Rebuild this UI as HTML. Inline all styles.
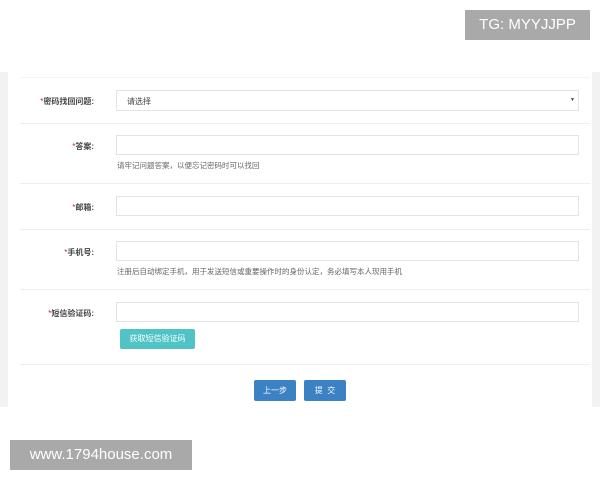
<!DOCTYPE html>
<html><head><meta charset="utf-8"><style>
body{margin:0;width:600px;height:480px;background:#fff;position:relative;overflow:hidden;font-family:"Liberation Sans","Noto Sans CJK SC",sans-serif}
.g{position:absolute;background:#f2f2f2}
.badge{position:absolute;background:#a9a9a9;color:#fff;font-size:15px;line-height:30px;text-align:center}
.lab{position:absolute;right:506px;font-size:8px;color:#444;font-weight:bold;white-space:nowrap}
.lab b{color:#a33;font-weight:normal}
.in{position:absolute;left:116px;width:463px;height:20px;border:1px solid #e3e3e3;background:#fff;box-sizing:border-box}
.hint{position:absolute;left:117px;font-size:7.5px;color:#666}
.sep{position:absolute;left:20px;width:570px;height:1px;background:#eee}
.btn{position:absolute;color:#fff;font-size:8px;text-align:center;border-radius:2px}
</style></head><body>
<div class="g" style="left:0;top:72px;width:8px;height:335px"></div>
<div class="g" style="left:592px;top:72px;width:8px;height:335px"></div>
<div class="badge" style="left:465px;top:10px;width:125px;height:30px">TG: MYYJJPP</div>
<div class="badge" style="left:10px;top:440px;width:182px;height:30px">www.1794house.com</div>
<div class="sep" style="top:77px;background:#f3f3f3"></div>
<div class="lab" style="top:96px"><b>*</b>密码找回问题:</div>
<div class="in" style="top:90px;height:21px;font-size:8px;color:#444;padding:5px 10px">请选择<span style="position:absolute;right:3px;top:6px;font-size:5px">▼</span></div>
<div class="sep" style="top:123px"></div>
<div class="lab" style="top:141px"><b>*</b>答案:</div>
<div class="in" style="top:135px"></div>
<div class="hint" style="top:160px">请牢记问题答案，以便忘记密码时可以找回</div>
<div class="sep" style="top:183px"></div>
<div class="lab" style="top:202px"><b>*</b>邮箱:</div>
<div class="in" style="top:196px"></div>
<div class="sep" style="top:229px"></div>
<div class="lab" style="top:247px"><b>*</b>手机号:</div>
<div class="in" style="top:241px"></div>
<div class="hint" style="top:266px">注册后自动绑定手机，用于发送短信或重要操作时的身份认定，务必填写本人现用手机</div>
<div class="sep" style="top:289px"></div>
<div class="lab" style="top:308px"><b>*</b>短信验证码:</div>
<div class="in" style="top:302px"></div>
<div class="btn" style="left:120px;top:329px;width:75px;height:20px;line-height:20px;background:#4fc3c5">获取短信验证码</div>
<div class="sep" style="top:364px"></div>
<div class="btn" style="left:254px;top:380px;width:42px;height:21px;line-height:21px;background:#3a82c4">上一步</div>
<div class="btn" style="left:304px;top:380px;width:42px;height:21px;line-height:21px;background:#3a82c4">提&nbsp;&nbsp;交</div>
</body></html>
